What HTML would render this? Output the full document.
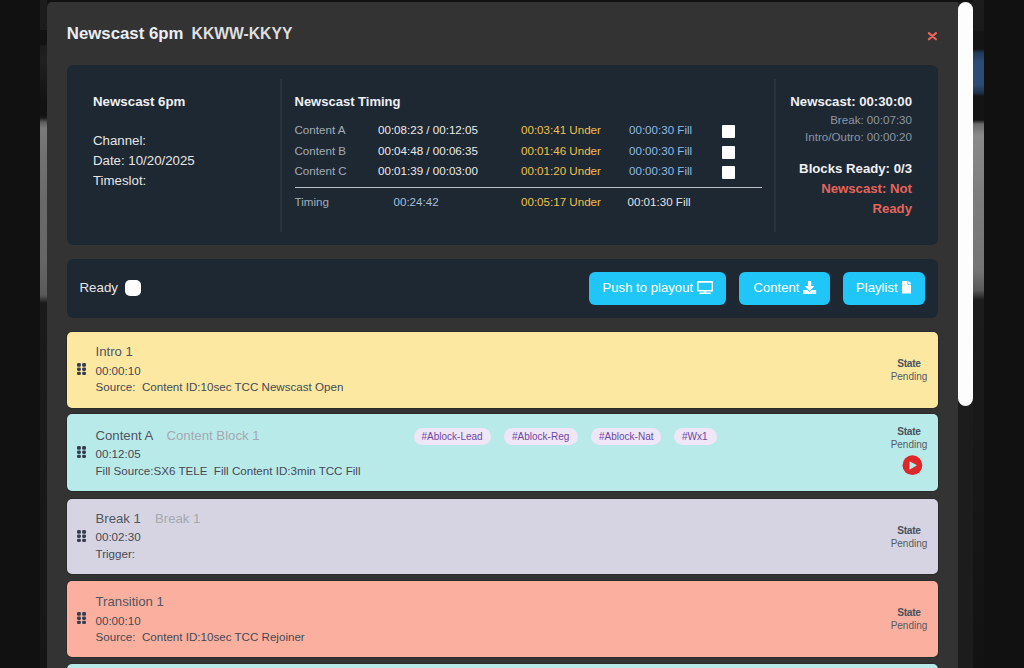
<!DOCTYPE html>
<html><head><meta charset="utf-8">
<style>
*{box-sizing:border-box;margin:0;padding:0}
html,body{width:1024px;height:668px;overflow:hidden;background:#111;font-family:"Liberation Sans",sans-serif}
.a{position:absolute;white-space:pre;line-height:1}
#stripL{position:absolute;left:40px;top:0;width:7px;height:668px;background:linear-gradient(#1c1c1c 0,#1c1c1c 30px,#121212 30px,#121212 45px,#1b1b1b 45px,#202020 60px,#1b1b1b 75px,#121212 100px,#121212 115px,#1b1b1b 118px,#5a5a5a 122px,#7a7a7a 128px,#727272 150px,#6a6a6a 200px,#666 260px,#5a5a5a 295px,#1a1a1a 303px,#161616 668px)}
#stripR{position:absolute;left:973px;top:0;width:11px;height:668px;background:linear-gradient(#1c1c1c 0,#1a1a1a 30px,#141414 32px,#141414 49px,#223a5a 53px,#2c4c76 62px,#2c4c76 85px,#1e3048 93px,#141414 96px,#141414 120px,#6a6a6a 124px,#8a8a8a 135px,#7c7c7c 200px,#757575 270px,#5a5a5a 290px,#1c1c1c 300px,#121212 668px)}
#modal{position:absolute;left:47px;top:2px;width:911px;height:700px;background:#333;border-top-left-radius:5px}
#track{position:absolute;left:958px;top:2px;width:15px;height:666px;background:#1c1c1c}
#thumb{position:absolute;left:958px;top:2px;width:15px;height:404px;background:#fdfdfd;border-radius:7.5px}
.panel{position:absolute;left:67px;width:871px;background:#1e2833;border-radius:6px}
.card{position:absolute;left:67px;width:871px;border-radius:5px;box-shadow:0 0 0 1px rgba(0,0,0,.16)}
.btn{position:absolute;top:272px;height:33px;background:#1fc6f7;border-radius:6px}
.tag{position:absolute;top:428px;height:17px;background:#efe6f8;border-radius:9px}
.grip{position:absolute;left:77px;width:9px;height:12px}
</style></head><body>
<div id="stripL"></div>
<div id="stripR"></div>
<div id="modal"></div>
<div id="track"></div>
<div id="thumb"></div>

<!-- header -->
<div class="a" style="left:66.8px;top:26.4px;font-size:16.8px;font-weight:700;color:#e9eef4">Newscast 6pm</div>
<div class="a" style="left:191.6px;top:26.2px;font-size:15.7px;font-weight:700;color:#dedede">KKWW-KKYY</div>
<svg class="a" style="left:927px;top:31px" width="11" height="11" viewBox="0 0 11 11"><path d="M1.9 2.1 L8.9 8.3 M8.9 2.1 L1.9 8.3" stroke="#e8645c" stroke-width="2.2" stroke-linecap="round"/></svg>

<!-- info panel -->
<div class="panel" style="top:65px;height:180px"></div>
<div class="a" style="left:280px;top:78.8px;width:2px;height:153px;background:#29313e"></div>
<div class="a" style="left:774.2px;top:78.8px;width:2px;height:153px;background:#29313e"></div>

<div class="a" style="left:93px;top:94.7px;font-size:13.3px;font-weight:700;color:#eef0f3">Newscast 6pm</div>
<div class="a" style="left:93px;top:134.2px;font-size:13.25px;color:#e6e6e6">Channel:</div>
<div class="a" style="left:93px;top:154.2px;font-size:13.25px;color:#e6e6e6">Date: 10/20/2025</div>
<div class="a" style="left:93px;top:173.9px;font-size:13.25px;color:#e6e6e6">Timeslot:</div>

<div class="a" style="left:294.5px;top:94.5px;font-size:13px;font-weight:700;color:#eef0f3">Newscast Timing</div>

<div class="a" style="left:294.5px;top:123.9px;font-size:11.6px;color:#a3acb8">Content A</div>
<div class="a" style="left:378px;top:123.9px;font-size:11.6px;color:#eaeaea">00:08:23 / 00:12:05</div>
<div class="a" style="left:521px;top:123.9px;font-size:11.6px;color:#efc04a">00:03:41 Under</div>
<div class="a" style="left:629px;top:123.9px;font-size:11.6px;color:#8fb8e4">00:00:30 Fill</div>
<div class="a" style="left:722px;top:125px;width:13px;height:13px;background:#fff;border-radius:1px"></div>

<div class="a" style="left:294.5px;top:144.5px;font-size:11.6px;color:#a3acb8">Content B</div>
<div class="a" style="left:378px;top:144.5px;font-size:11.6px;color:#eaeaea">00:04:48 / 00:06:35</div>
<div class="a" style="left:521px;top:144.5px;font-size:11.6px;color:#efc04a">00:01:46 Under</div>
<div class="a" style="left:629px;top:144.5px;font-size:11.6px;color:#8fb8e4">00:00:30 Fill</div>
<div class="a" style="left:722px;top:145.5px;width:13px;height:13px;background:#fff;border-radius:1px"></div>

<div class="a" style="left:294.5px;top:165px;font-size:11.6px;color:#a3acb8">Content C</div>
<div class="a" style="left:378px;top:165px;font-size:11.6px;color:#eaeaea">00:01:39 / 00:03:00</div>
<div class="a" style="left:521px;top:165px;font-size:11.6px;color:#efc04a">00:01:20 Under</div>
<div class="a" style="left:629px;top:165px;font-size:11.6px;color:#8fb8e4">00:00:30 Fill</div>
<div class="a" style="left:722px;top:166px;width:13px;height:13px;background:#fff;border-radius:1px"></div>

<div class="a" style="left:294.5px;top:186.5px;width:467px;height:1.3px;background:#bcc0c6"></div>

<div class="a" style="left:294.5px;top:196px;font-size:11.6px;color:#a3acb8">Timing</div>
<div class="a" style="left:393.5px;top:196px;font-size:11.6px;color:#a6bfdb">00:24:42</div>
<div class="a" style="left:521px;top:196px;font-size:11.6px;color:#efc04a">00:05:17 Under</div>
<div class="a" style="left:627.5px;top:196px;font-size:11.6px;color:#e2e2e2">00:01:30 Fill</div>

<div class="a" style="left:762px;top:95px;width:150px;text-align:right;font-size:13.2px;font-weight:700;color:#eef0f3">Newscast: 00:30:00</div>
<div class="a" style="left:762px;top:114px;width:150px;text-align:right;font-size:11.6px;color:#8c96a3">Break: 00:07:30</div>
<div class="a" style="left:762px;top:131px;width:150px;text-align:right;font-size:11.6px;color:#8c96a3">Intro/Outro: 00:00:20</div>
<div class="a" style="left:762px;top:162px;width:150px;text-align:right;font-size:13.2px;font-weight:700;color:#eef0f3">Blocks Ready: 0/3</div>
<div class="a" style="left:762px;top:182px;width:150px;text-align:right;font-size:13.2px;font-weight:700;color:#e5645a">Newscast: Not</div>
<div class="a" style="left:762px;top:202px;width:150px;text-align:right;font-size:13.2px;font-weight:700;color:#e5645a">Ready</div>

<!-- toolbar -->
<div class="panel" style="top:259px;height:59px"></div>
<div class="a" style="left:79.5px;top:281.3px;font-size:13.3px;color:#e6e6e6">Ready</div>
<div class="a" style="left:125px;top:280px;width:16px;height:16px;background:#fff;border-radius:5px"></div>

<div class="btn" style="left:589px;width:137px"></div>
<div class="a" style="left:602.5px;top:280.9px;font-size:13.15px;color:#fff">Push to playout</div>
<svg class="a" style="left:696.7px;top:281.2px" width="16.3" height="13.04" viewBox="0 0 640 512"><path fill="#fff" d="M592 0H48A48 48 0 0 0 0 48v320a48 48 0 0 0 48 48h240v32H112a16 16 0 0 0-16 16v32a16 16 0 0 0 16 16h416a16 16 0 0 0 16-16v-32a16 16 0 0 0-16-16H352v-32h240a48 48 0 0 0 48-48V48a48 48 0 0 0-48-48zm-16 352H64V64h512z"/></svg>

<div class="btn" style="left:739px;width:91px"></div>
<div class="a" style="left:753.5px;top:280.9px;font-size:13.15px;color:#fff">Content</div>
<svg class="a" style="left:803.4px;top:281.3px" width="13.2" height="13.2" viewBox="0 0 512 512"><path fill="#fff" d="M216 0h80c13.3 0 24 10.7 24 24v168h87.7c17.8 0 26.7 21.5 14.1 34.1L269.7 378.3c-7.5 7.5-19.8 7.5-27.3 0L90.1 226.1c-12.6-12.6-3.700-34.1 14.1-34.1H192V24c0-13.3 10.7-24 24-24zm296 376v112c0 13.3-10.7 24-24 24H24c-13.3 0-24-10.7-24-24V376c0-13.3 10.7-24 24-24h146.7l49 49c20.1 20.1 52.5 20.1 72.6 0l49-49H488c13.3 0 24 10.7 24 24zm-124 88c0-11-9-20-20-20s-20 9-20 20 9 20 20 20 20-9 20-20zm64 0c0-11-9-20-20-20s-20 9-20 20 9 20 20 20 20-9 20-20z"/></svg>

<div class="btn" style="left:843px;width:82px"></div>
<div class="a" style="left:856px;top:280.9px;font-size:13.15px;color:#fff">Playlist</div>
<svg class="a" style="left:901.8px;top:281.4px" width="9.4" height="12.5" viewBox="0 0 384 512"><path fill="#fff" d="M224 136V0H24C10.7 0 0 10.7 0 24v464c0 13.3 10.7 24 24 24h336c13.3 0 24-10.7 24-24V160H248c-13.2 0-24-10.8-24-24zm160-14.1v6.1H256V0h6.1c6.4 0 12.5 2.5 17 7l97.9 98c4.5 4.5 7 10.6 7 16.9z"/></svg>

<!-- cards -->
<div class="card" style="top:331.5px;height:76px;background:#fde8a2"></div>
<div class="card" style="top:414px;height:77px;background:#b9eaea"></div>
<div class="card" style="top:498.5px;height:75.6px;background:#d6d4e2"></div>
<div class="card" style="top:581.2px;height:75.9px;background:#fbb09f"></div>
<div class="card" style="top:664px;height:20px;background:#b9eaea"></div>

<!-- card 1 -->
<svg class="grip" style="top:363px" viewBox="0 0 9 12"><g fill="#363f50"><rect x="0" y="0" width="3.9" height="3.7" rx="1.3"/><rect x="5.1" y="0" width="3.9" height="3.7" rx="1.3"/><rect x="0" y="4.5" width="3.9" height="3.4" rx="1.3"/><rect x="5.1" y="4.5" width="3.9" height="3.4" rx="1.3"/><rect x="0" y="8.7" width="3.9" height="3.3" rx="1.3"/><rect x="5.1" y="8.7" width="3.9" height="3.3" rx="1.3"/></g></svg>
<div class="a" style="left:95.5px;top:344.65px;font-size:13.2px;color:#4f5562">Intro 1</div>
<div class="a" style="left:95.5px;top:364.6px;font-size:11.6px;color:#464955">00:00:10</div>
<div class="a" style="left:95.5px;top:381.1px;font-size:11.6px;color:#464955">Source:  Content ID:10sec TCC Newscast Open</div>
<div class="a" style="left:879px;top:358.9px;width:60px;text-align:center;font-size:10.2px;font-weight:700;letter-spacing:-0.3px;color:#4b5260">State</div>
<div class="a" style="left:879px;top:371.5px;width:60px;text-align:center;font-size:10px;color:#555a62">Pending</div>

<!-- card 2 -->
<svg class="grip" style="top:446px" viewBox="0 0 9 12"><g fill="#363f50"><rect x="0" y="0" width="3.9" height="3.7" rx="1.3"/><rect x="5.1" y="0" width="3.9" height="3.7" rx="1.3"/><rect x="0" y="4.5" width="3.9" height="3.4" rx="1.3"/><rect x="5.1" y="4.5" width="3.9" height="3.4" rx="1.3"/><rect x="0" y="8.7" width="3.9" height="3.3" rx="1.3"/><rect x="5.1" y="8.7" width="3.9" height="3.3" rx="1.3"/></g></svg>
<div class="a" style="left:95.5px;top:428.65px;font-size:13.2px;color:#4f5562">Content A</div>
<div class="a" style="left:166.5px;top:428.65px;font-size:13.2px;color:#a4a8b0">Content Block 1</div>
<div class="a" style="left:95.5px;top:448px;font-size:11.6px;color:#464955">00:12:05</div>
<div class="a" style="left:95.5px;top:464.5px;font-size:11.6px;color:#464955">Fill Source:SX6 TELE  Fill Content ID:3min TCC Fill</div>
<div class="tag" style="left:413.5px;width:77.5px"></div>
<div class="a" style="left:421.5px;top:432px;font-size:10px;color:#6d48a4">#Ablock-Lead</div>
<div class="tag" style="left:504px;width:73.5px"></div>
<div class="a" style="left:512px;top:432px;font-size:10px;color:#6d48a4">#Ablock-Reg</div>
<div class="tag" style="left:591px;width:70px"></div>
<div class="a" style="left:599px;top:432px;font-size:10px;color:#6d48a4">#Ablock-Nat</div>
<div class="tag" style="left:674px;width:42.5px"></div>
<div class="a" style="left:682px;top:432px;font-size:10px;color:#6d48a4">#Wx1</div>
<div class="a" style="left:879px;top:427.4px;width:60px;text-align:center;font-size:10.2px;font-weight:700;letter-spacing:-0.3px;color:#4b5260">State</div>
<div class="a" style="left:879px;top:440px;width:60px;text-align:center;font-size:10px;color:#555a62">Pending</div>
<svg class="a" style="left:902px;top:455px" width="21" height="21" viewBox="0 0 21 21"><circle cx="10.4" cy="10.2" r="9.9" fill="#dc2828"/><path d="M7.6 6.6 Q7.4 6.2 7.9 6.4 L14.6 10.1 Q15 10.3 14.6 10.6 L7.9 14.4 Q7.4 14.6 7.5 14.1 Z" fill="#b9eaea"/></svg>

<!-- card 3 -->
<svg class="grip" style="top:530px" viewBox="0 0 9 12"><g fill="#363f50"><rect x="0" y="0" width="3.9" height="3.7" rx="1.3"/><rect x="5.1" y="0" width="3.9" height="3.7" rx="1.3"/><rect x="0" y="4.5" width="3.9" height="3.4" rx="1.3"/><rect x="5.1" y="4.5" width="3.9" height="3.4" rx="1.3"/><rect x="0" y="8.7" width="3.9" height="3.3" rx="1.3"/><rect x="5.1" y="8.7" width="3.9" height="3.3" rx="1.3"/></g></svg>
<div class="a" style="left:95.5px;top:511.65px;font-size:13.2px;color:#4f5562">Break 1</div>
<div class="a" style="left:155px;top:511.65px;font-size:13.2px;color:#a4a8b0">Break 1</div>
<div class="a" style="left:95.5px;top:531px;font-size:11.6px;color:#464955">00:02:30</div>
<div class="a" style="left:95.5px;top:548px;font-size:11.6px;color:#464955">Trigger:</div>
<div class="a" style="left:879px;top:526.4px;width:60px;text-align:center;font-size:10.2px;font-weight:700;letter-spacing:-0.3px;color:#4b5260">State</div>
<div class="a" style="left:879px;top:539px;width:60px;text-align:center;font-size:10px;color:#555a62">Pending</div>

<!-- card 4 -->
<svg class="grip" style="top:612px" viewBox="0 0 9 12"><g fill="#363f50"><rect x="0" y="0" width="3.9" height="3.7" rx="1.3"/><rect x="5.1" y="0" width="3.9" height="3.7" rx="1.3"/><rect x="0" y="4.5" width="3.9" height="3.4" rx="1.3"/><rect x="5.1" y="4.5" width="3.9" height="3.4" rx="1.3"/><rect x="0" y="8.7" width="3.9" height="3.3" rx="1.3"/><rect x="5.1" y="8.7" width="3.9" height="3.3" rx="1.3"/></g></svg>
<div class="a" style="left:95.5px;top:594.75px;font-size:13.2px;color:#4f5562">Transition 1</div>
<div class="a" style="left:95.5px;top:614.5px;font-size:11.6px;color:#464955">00:00:10</div>
<div class="a" style="left:95.5px;top:631px;font-size:11.6px;color:#464955">Source:  Content ID:10sec TCC Rejoiner</div>
<div class="a" style="left:879px;top:608.4px;width:60px;text-align:center;font-size:10.2px;font-weight:700;letter-spacing:-0.3px;color:#4b5260">State</div>
<div class="a" style="left:879px;top:621px;width:60px;text-align:center;font-size:10px;color:#555a62">Pending</div>

</body></html>
